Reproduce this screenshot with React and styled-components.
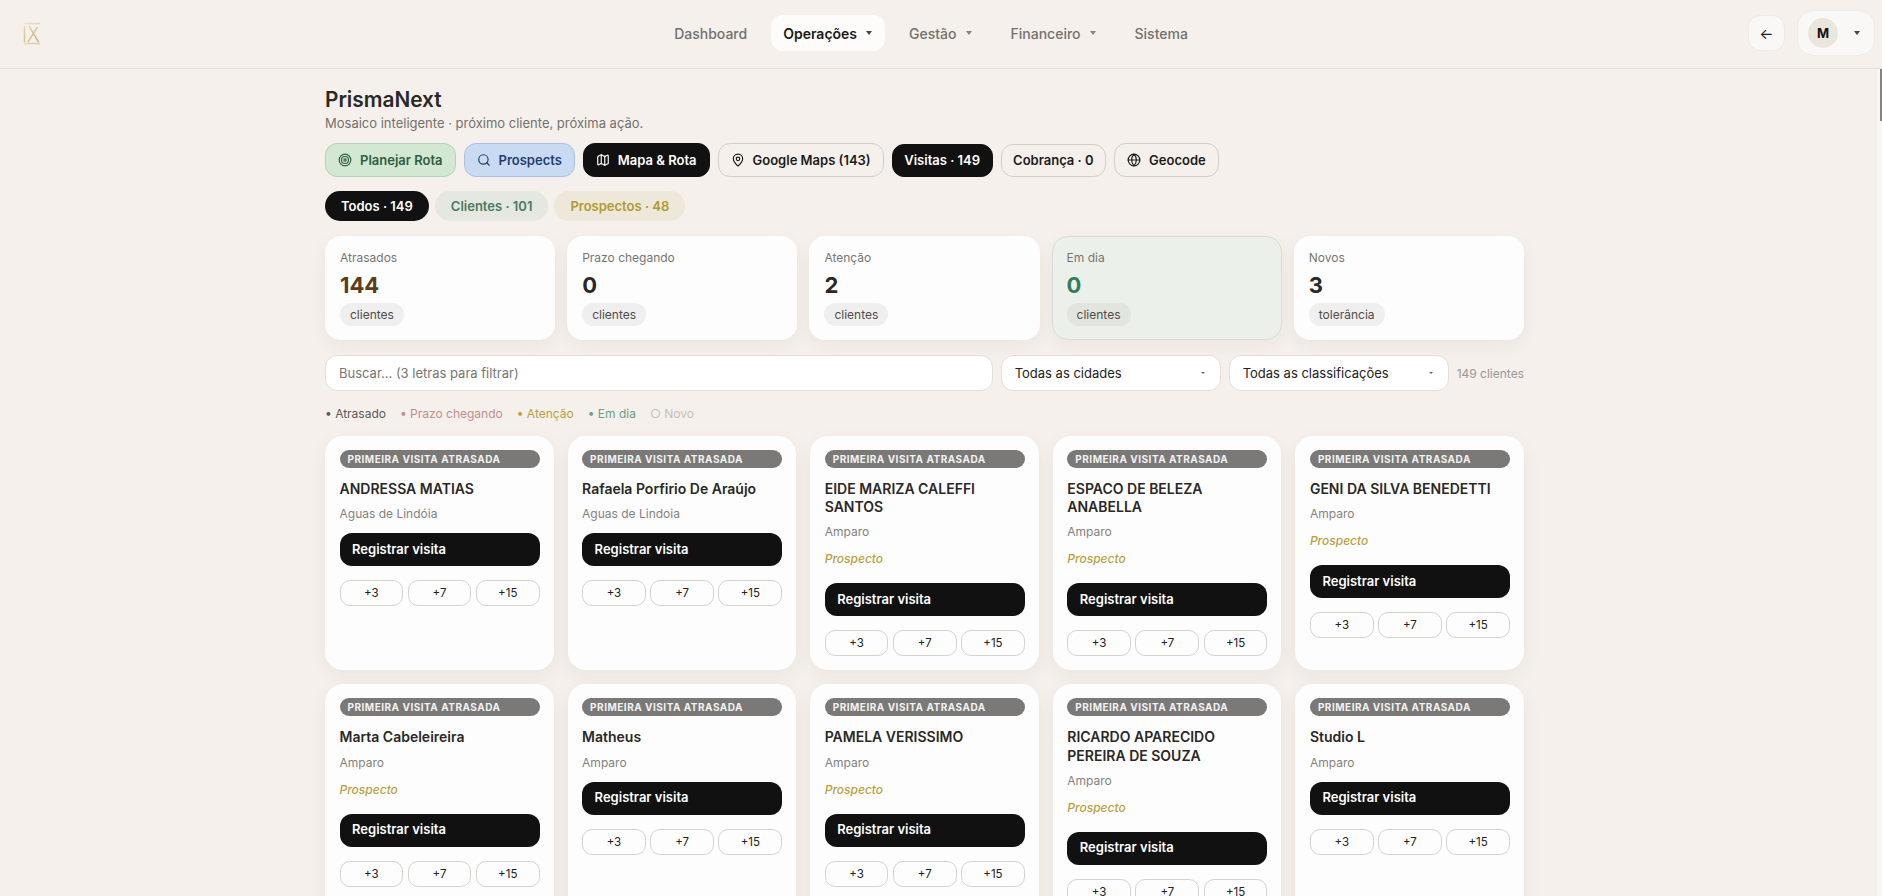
import React from "react";
import styled, { createGlobalStyle } from "styled-components";
import { Target, Search, Map, MapPin, Globe } from "lucide-react";

const GlobalStyle = createGlobalStyle`
  html, body { margin: 0; padding: 0; height: 100%; overflow: hidden; }
  body {
    background: #f5f0eb;
    color: #2a2826;
    font-family: Inter, "Noto Sans", sans-serif;
  }
  * { box-sizing: border-box; }
`;

const Shell = styled.div`
  position: relative;
  height: 896px;
  overflow: hidden;
`;

const Header = styled.header`
  height: 69px;
  display: flex;
  align-items: center;
  justify-content: space-between;
  padding: 0 7px 2px 22px;
  border-bottom: 1px solid #e4e0da;
`;

const Nav = styled.nav`
  display: flex;
  align-items: center;
  gap: 12px;
  margin-left: 73px;
`;

const NavItem = styled.a`
  height: 36px;
  display: flex;
  align-items: center;
  gap: 9px;
  padding: 0 12px;
  border-radius: 12px;
  font-size: 14px;
  font-weight: ${(p) => (p.$active ? 600 : 500)};
  color: ${(p) => (p.$active ? "#1c1b1a" : "#73716e")};
  background: ${(p) => (p.$active ? "#fdfcfb" : "transparent")};
`;

const Caret = styled.span`
  width: 0;
  height: 0;
  margin-right: ${(p) => p.$after ?? 3}px;
  border-left: 3px solid transparent;
  border-right: 3px solid transparent;
  border-top: 4px solid ${(p) => p.$color || "#85827f"};
`;

const HeaderRight = styled.div`
  display: flex;
  align-items: center;
  gap: 12px;
`;

const BackButton = styled.button`
  width: 37px;
  height: 36px;
  padding: 1px 0 0;
  border: 1px solid #eeeae5;
  border-radius: 12px;
  background: #faf8f6;
  color: #222;
  font-family: Inter, sans-serif;
  font-size: 15px;
`;

const Account = styled.div`
  width: 78px;
  height: 46px;
  display: flex;
  align-items: center;
  justify-content: space-between;
  padding: 0 13px 0 10px;
  border: 1px solid #eeeae5;
  border-radius: 16px;
  background: #faf8f6;
`;

const Avatar = styled.span`
  width: 30px;
  height: 30px;
  display: flex;
  align-items: center;
  justify-content: center;
  border-radius: 50%;
  background: #ebe6dc;
  color: #111;
  font-size: 13px;
  font-weight: 700;
`;

const ScrollTrack = styled.div`
  position: absolute;
  top: 69px;
  right: 0;
  bottom: 0;
  width: 5px;
  background: #f9f7f4;
`;

const ScrollThumb = styled.div`
  position: absolute;
  top: 0;
  right: 0;
  width: 2px;
  height: 52px;
  background: #85827f;
`;

const Main = styled.main`
  padding: 19px 33px 0 0;
`;

const Container = styled.div`
  width: 1199px;
  margin: 0 auto;
`;

const Title = styled.h1`
  margin: 0;
  font-size: 20.8px;
  line-height: 24px;
  font-weight: 600;
  color: #2a2826;
`;

const Subtitle = styled.p`
  margin: 3px 0 12px;
  font-size: 13px;
  line-height: 16px;
  color: #73716e;
`;

const ActionRow = styled.div`
  display: flex;
  align-items: center;
  gap: 8px;
  margin-bottom: 14px;
`;

const tones = {
  green: "background:#d3e8d3;border-color:#b6d2b6;color:#2f5d3f;",
  blue: "background:#c9dbf3;border-color:#aac2e2;color:#1f3f6e;",
  dark: "background:#111;border-color:#111;color:#fff;",
  plain: "background:transparent;border-color:#d2cec8;color:#1c1b1a;",
};

const ActionButton = styled.button`
  height: ${(p) => (p.$icon ? 34 : 33)}px;
  display: flex;
  align-items: center;
  gap: 8px;
  padding: 0 ${(p) => (p.$icon ? 12 : 11.5)}px;
  border: 1px solid;
  border-radius: 12px;
  font-family: Inter, sans-serif;
  font-size: 13px;
  font-weight: 600;
  ${(p) => tones[p.$tone]}
`;

const PillRow = styled.div`
  display: flex;
  gap: 6px;
  margin-bottom: 15px;
`;

const pillTones = {
  dark: "background:#111;color:#fff;",
  green: "background:#e4e8e1;color:#4a7a5e;",
  gold: "background:#ede8d9;color:#b09a30;",
};

const Pill = styled.span`
  height: 30px;
  display: flex;
  align-items: center;
  padding: 0 16px;
  border-radius: 15px;
  font-size: 13px;
  font-weight: 600;
  ${(p) => pillTones[p.$tone]}
`;

const KpiGrid = styled.section`
  display: grid;
  grid-template-columns: repeat(5, 1fr);
  gap: 12px;
  margin-bottom: 15px;
`;

const KpiCard = styled.div`
  height: 104px;
  padding: 13px 14px;
  border: 1px solid ${(p) => (p.$ok ? "#d9ddd5" : "transparent")};
  border-radius: 16px;
  background: ${(p) => (p.$ok ? "#ecf0ea" : "#fdfdfd")};
  box-shadow: 0 6px 18px rgba(60, 45, 30, 0.05);
`;

const KpiLabel = styled.div`
  font-size: 12px;
  line-height: 16px;
  color: #777573;
`;

const KpiValue = styled.div`
  margin-top: 5px;
  font-size: 22px;
  line-height: 28px;
  font-weight: 700;
  color: ${(p) => p.$color || "#2a2826"};
`;

const KpiBadge = styled.span`
  display: inline-flex;
  align-items: center;
  height: 23px;
  margin-top: 4px;
  padding: 0 10px;
  border-radius: 12px;
  font-size: 12px;
  color: #4f4d4b;
  background: ${(p) => (p.$ok ? "#e1e5de" : "#efefef")};
`;

const FilterRow = styled.div`
  display: flex;
  align-items: center;
  gap: 8px;
  margin-bottom: 15px;
`;

const SearchInput = styled.input`
  flex: 1;
  height: 36px;
  padding: 0 13px;
  border: 1px solid #e2ded8;
  border-radius: 12px;
  background: #fff;
  font-family: Inter, sans-serif;
  font-size: 13px;
  outline: none;
  &::placeholder { color: #777573; opacity: 1; }
`;

const SelectBox = styled.div`
  position: relative;
  width: 220px;
  height: 36px;
  display: flex;
  align-items: center;
  padding: 0 13px;
  border: 1px solid #e2ded8;
  border-radius: 12px;
  background: #fff;
  font-size: 13px;
  color: #222;
  &::after {
    content: "";
    position: absolute;
    right: 15px;
    top: 16px;
    border-left: 2px solid transparent;
    border-right: 2px solid transparent;
    border-top: 2px solid #666;
  }
`;

const Count = styled.span`
  font-size: 12px;
  color: #9b9896;
`;

const Legend = styled.div`
  display: flex;
  gap: 14px;
  margin-bottom: 14px;
  font-size: 12px;
  line-height: 16px;
`;

const LegendItem = styled.span`
  color: ${(p) => p.$color};
`;

const CardGrid = styled.section`
  display: grid;
  grid-template-columns: repeat(5, 1fr);
  gap: 14px;
`;

const ClientCard = styled.article`
  min-height: 234px;
  padding: 14px 14px 14px 14.5px;
  border-radius: 18px;
  background: #fdfdfd;
  box-shadow: 0 6px 20px rgba(60, 45, 30, 0.05);
`;

const StatusTag = styled.div`
  height: 18px;
  display: flex;
  align-items: center;
  padding: 0 8px;
  border-radius: 9px;
  background: #7a7977;
  color: #f2f2f2;
  font-size: 10px;
  font-weight: 700;
  letter-spacing: 0.5px;
  text-transform: uppercase;
`;

const ClientName = styled.h3`
  margin: 12px 0 8px;
  font-size: 14px;
  line-height: 18.2px;
  font-weight: 600;
  color: #2a2826;
`;

const ClientCity = styled.div`
  margin-bottom: 11px;
  font-size: 12px;
  line-height: 16px;
  color: #848280;
`;

const ProspectMark = styled.div`
  margin-bottom: 16px;
  font-size: 12px;
  line-height: 16px;
  font-style: italic;
  font-weight: 500;
  color: #b8a040;
`;

const RegisterButton = styled.button`
  width: 100%;
  height: 33px;
  padding: 0 12.5px 2px;
  margin-bottom: 14px;
  border: 0;
  border-radius: 12px;
  background: #111;
  color: #fff;
  font-family: Inter, sans-serif;
  font-size: 13px;
  font-weight: 600;
  text-align: left;
`;

const DelayRow = styled.div`
  display: grid;
  grid-template-columns: repeat(3, 1fr);
  gap: 4.5px;
`;

const DelayButton = styled.button`
  height: 26px;
  padding: 0;
  border: 1px solid #d6d3cf;
  border-radius: 10px;
  background: transparent;
  color: #222;
  font-family: Inter, sans-serif;
  font-size: 11.5px;
`;

const LogoMark = () => (
  <svg width="19" height="23" viewBox="0 0 19 23" fill="none">
    <defs>
      <linearGradient id="gold" x1="0" y1="0" x2="1" y2="1">
        <stop offset="0" stopColor="#e6d6ac" />
        <stop offset="1" stopColor="#c2a667" />
      </linearGradient>
    </defs>
    <path d="M2 1.5H18M2 21.5H18" stroke="url(#gold)" strokeWidth="1.6" opacity="0.55" />
    <path d="M2.5 4V20M7 4L16.5 20M15.5 5L6 20" stroke="url(#gold)" strokeWidth="1.4" />
  </svg>
);

const kpis = [
  { label: "Atrasados", value: "144", color: "#5a3e1b", badge: "clientes" },
  { label: "Prazo chegando", value: "0", badge: "clientes" },
  { label: "Atenção", value: "2", badge: "clientes" },
  { label: "Em dia", value: "0", color: "#2f7d5b", badge: "clientes", ok: true },
  { label: "Novos", value: "3", badge: "tolerância" },
];

const clients = [
  { name: "ANDRESSA MATIAS", city: "Aguas de Lindóia" },
  { name: "Rafaela Porfirio De Araújo", city: "Aguas de Lindoia" },
  { name: "EIDE MARIZA CALEFFI SANTOS", city: "Amparo", prospect: true },
  { name: "ESPACO DE BELEZA ANABELLA", city: "Amparo", prospect: true },
  { name: "GENI DA SILVA BENEDETTI", city: "Amparo", prospect: true },
  { name: "Marta Cabeleireira", city: "Amparo", prospect: true },
  { name: "Matheus", city: "Amparo" },
  { name: "PAMELA VERISSIMO", city: "Amparo", prospect: true },
  { name: "RICARDO APARECIDO PEREIRA DE SOUZA", city: "Amparo", prospect: true },
  { name: "Studio L", city: "Amparo" },
];

const legend = [
  { text: "• Atrasado", color: "#5b5a58" },
  { text: "• Prazo chegando", color: "#c08f8f" },
  { text: "• Atenção", color: "#b8a040" },
  { text: "• Em dia", color: "#6f9d85" },
  { text: "○ Novo", color: "#c5c1bc" },
];

export default function App() {
  return (
    <Shell>
      <GlobalStyle />
      <Header>
        <LogoMark />
        <Nav>
          <NavItem>Dashboard</NavItem>
          <NavItem $active>Operações <Caret $color="#444" $after={1} /></NavItem>
          <NavItem>Gestão <Caret /></NavItem>
          <NavItem>Financeiro <Caret /></NavItem>
          <NavItem>Sistema</NavItem>
        </Nav>
        <HeaderRight>
          <BackButton>←</BackButton>
          <Account>
            <Avatar>M</Avatar>
            <Caret $color="#444" $after={1} />
          </Account>
        </HeaderRight>
      </Header>

      <Main>
        <Container>
          <Title>PrismaNext</Title>
          <Subtitle>Mosaico inteligente · próximo cliente, próxima ação.</Subtitle>

          <ActionRow>
            <ActionButton $icon $tone="green"><Target size={14} />Planejar Rota</ActionButton>
            <ActionButton $icon $tone="blue"><Search size={14} />Prospects</ActionButton>
            <ActionButton $icon $tone="dark"><Map size={14} />Mapa &amp; Rota</ActionButton>
            <ActionButton $icon $tone="plain"><MapPin size={14} />Google Maps (143)</ActionButton>
            <ActionButton $tone="dark">Visitas · 149</ActionButton>
            <ActionButton $tone="plain">Cobrança · 0</ActionButton>
            <ActionButton $icon $tone="plain"><Globe size={14} />Geocode</ActionButton>
          </ActionRow>

          <PillRow>
            <Pill $tone="dark">Todos · 149</Pill>
            <Pill $tone="green">Clientes · 101</Pill>
            <Pill $tone="gold">Prospectos · 48</Pill>
          </PillRow>

          <KpiGrid>
            {kpis.map((k) => (
              <KpiCard key={k.label} $ok={k.ok}>
                <KpiLabel>{k.label}</KpiLabel>
                <KpiValue $color={k.color}>{k.value}</KpiValue>
                <KpiBadge $ok={k.ok}>{k.badge}</KpiBadge>
              </KpiCard>
            ))}
          </KpiGrid>

          <FilterRow>
            <SearchInput placeholder="Buscar... (3 letras para filtrar)" />
            <SelectBox>Todas as cidades</SelectBox>
            <SelectBox>Todas as classificações</SelectBox>
            <Count>149 clientes</Count>
          </FilterRow>

          <Legend>
            {legend.map((l) => (
              <LegendItem key={l.text} $color={l.color}>{l.text}</LegendItem>
            ))}
          </Legend>

          <CardGrid>
            {clients.map((c) => (
              <ClientCard key={c.name}>
                <StatusTag>Primeira visita atrasada</StatusTag>
                <ClientName>{c.name}</ClientName>
                <ClientCity>{c.city}</ClientCity>
                {c.prospect && <ProspectMark>Prospecto</ProspectMark>}
                <RegisterButton>Registrar visita</RegisterButton>
                <DelayRow>
                  <DelayButton>+3</DelayButton>
                  <DelayButton>+7</DelayButton>
                  <DelayButton>+15</DelayButton>
                </DelayRow>
              </ClientCard>
            ))}
          </CardGrid>
        </Container>
      </Main>

      <ScrollTrack><ScrollThumb /></ScrollTrack>
    </Shell>
  );
}
